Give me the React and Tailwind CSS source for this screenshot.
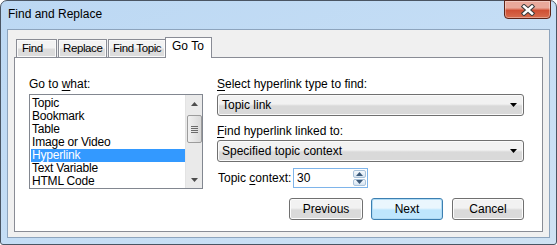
import React from 'react'

const ITEMS = ['Topic', 'Bookmark', 'Table', 'Image or Video', 'Hyperlink', 'Text Variable', 'HTML Code']
const SELECTED = 'Hyperlink'

const TABS = [
  { label: 'Find', w: 'w-[41px] pl-[5px]' },
  { label: 'Replace', w: 'w-[49px] ml-px pl-[4px]' },
  { label: 'Find Topic', w: 'w-[58px] ml-px pl-[4px]' },
]

function Key({ children }) {
  return <span className="underline underline-offset-2">{children}</span>
}

function CloseIcon() {
  return (
    <svg width="16" height="12" viewBox="0 0 16 12">
      <path d="M4 2.5L12 9.5M12 2.5L4 9.5" stroke="#3b3b3b" strokeWidth="4.5" strokeLinecap="square" />
      <path d="M4 2.5L12 9.5M12 2.5L4 9.5" stroke="#ffffff" strokeWidth="2.5" strokeLinecap="square" />
    </svg>
  )
}

function DropArrow() {
  return (
    <svg width="7" height="4" viewBox="0 0 7 4">
      <path d="M0 0H7L3.5 4Z" fill="#000" />
    </svg>
  )
}

function SmallArrow({ up, color = '#4d4d4d' }) {
  return (
    <svg width="7" height="4" viewBox="0 0 7 4">
      <path d={up ? 'M0 4H7L3.5 0Z' : 'M0 0H7L3.5 4Z'} fill={color} />
    </svg>
  )
}

function Combo({ value }) {
  return (
    <div className="h-[22px] w-full flex items-center justify-between rounded-[3px] border border-[#707070] bg-gradient-to-b from-[#f2f2f2] from-45% to-[#d9d9d9] to-55% shadow-[inset_0_0_0_1px_#fafafa] pl-[4px] pr-[6px]">
      <span>{value}</span>
      <DropArrow />
    </div>
  )
}

function Button({ children, focused, w }) {
  return (
    <div
      className={
        w + ' h-[22px] flex items-center justify-center rounded-[3px] border ' +
        (focused
          ? 'border-[#3c7fb1] bg-gradient-to-b from-[#eaf6fd] from-45% to-[#bee6fd] to-55% shadow-[inset_0_0_0_1px_#b0dbf4]'
          : 'border-[#707070] bg-gradient-to-b from-[#f2f2f2] from-45% to-[#dadada] to-55% shadow-[inset_0_0_0_1px_#fcfcfc]')
      }
    >
      {children}
    </div>
  )
}

export default function App() {
  return (
    <div className="w-[557px] h-[245px] font-['Liberation_Sans',Arial,sans-serif] text-[12px] leading-[15px] text-black">
      <div className="w-full h-full flex flex-col rounded-t-[7px] rounded-b-[3px] border border-[#4a5563] bg-gradient-to-br from-[#bcd8f3] via-[#c4ddf5] to-[#cfe2f3]">
        {/* Title bar */}
        <div className="h-[28px] flex items-start justify-between pl-[7px] pr-[5px]">
          <div className="pt-[6px]">Find and Replace</div>
          <div className="w-[47px] h-[19px] -mt-px flex items-center justify-center rounded-b-[4px] border border-[#5c2419] bg-gradient-to-b from-[#e9a99b] from-40% via-[#cf4f34] via-55% to-[#d76c4e] shadow-[inset_0_0_0_1px_rgba(255,255,255,0.35)]">
            <CloseIcon />
          </div>
        </div>

        {/* Client area */}
        <div className="flex-1 mx-[6px] mb-[6px] border border-[#8da4bd] bg-[#f0f0f0] flex flex-col pt-[7px] pl-[6px] pr-[6px] pb-[5px]">
          {/* Tabs */}
          <div className="flex items-end h-[20px] pl-[2px] relative z-10">
            {TABS.map(t => (
              <div
                key={t.label}
                className={t.w + ' h-[18px] border border-b-0 border-[#898c95] bg-gradient-to-b from-[#f3f3f3] from-45% to-[#dcdcdc] to-55% shadow-[inset_0_0_0_1px_#fafafa] pt-[1px] whitespace-nowrap text-[11.5px] tracking-[-0.4px]'}
              >
                {t.label}
              </div>
            ))}
            <div className="w-[47px] h-[21px] -mb-px -ml-px border border-b-0 border-[#898c95] bg-white pl-[6px] pt-[1px] whitespace-nowrap">
              Go To
            </div>
          </div>

          {/* Panel */}
          <div className="flex-1 border border-[#898c95] bg-white flex pl-[14px] pt-[19px]">
            {/* Left column */}
            <div className="w-[174px] flex flex-col">
              <div className="h-[15px]">Go to <Key>w</Key>hat:</div>
              <div className="mt-[2px] h-[95px] border border-[#828790] bg-white flex">
                <div className="flex-1 pt-[2px] pl-px">
                  {ITEMS.map(it => (
                    <div
                      key={it}
                      className={'h-[13px] leading-[13px] pl-[1px] tracking-[-0.2px] ' + (it === SELECTED ? 'bg-[#3399ff] text-white' : '')}
                    >
                      {it}
                    </div>
                  ))}
                </div>
                <div className="w-[17px] bg-[#eaeaea] border-l border-[#e3e3e3] flex flex-col items-center">
                  <div className="h-[17px] w-full flex items-center justify-center">
                    <SmallArrow up />
                  </div>
                  <div className="mt-[3px] w-[15px] h-[28px] rounded-[2px] border border-[#9c9c9c] bg-gradient-to-r from-[#f1f1f1] to-[#d9d9d9] flex flex-col items-center justify-center gap-[1px]">
                    <div className="w-[7px] h-px bg-[#6b6b6b]" />
                    <div className="w-[7px] h-px bg-[#6b6b6b]" />
                    <div className="w-[7px] h-px bg-[#6b6b6b]" />
                    <div className="w-[7px] h-px bg-[#6b6b6b]" />
                  </div>
                  <div className="flex-1" />
                  <div className="h-[17px] w-full flex items-center justify-center">
                    <SmallArrow />
                  </div>
                </div>
              </div>
            </div>

            {/* Right column */}
            <div className="ml-[14px] w-[307px] flex flex-col">
              <div className="h-[15px]"><Key>S</Key>elect hyperlink type to find:</div>
              <div className="mt-[2px]"><Combo value="Topic link" /></div>
              <div className="mt-[8px] h-[15px]"><Key>F</Key>ind hyperlink linked to:</div>
              <div className="mt-[1px]"><Combo value="Specified topic context" /></div>
              <div className="mt-[6px] flex items-center">
                <div className="w-[76px] pl-px">Topic <Key>c</Key>ontext:</div>
                <div className="w-[75px] h-[20px] border border-[#7eb4ea] bg-white flex">
                  <div className="flex-1 pl-[3px] flex items-center">30</div>
                  <div className="w-[15px] flex flex-col gap-px p-px">
                    <div className="flex-1 rounded-[2px] border border-[#a9c2da] bg-gradient-to-b from-[#f5f9fd] to-[#d6e3f0] flex items-center justify-center">
                      <SmallArrow up color="#3c5a7a" />
                    </div>
                    <div className="flex-1 rounded-[2px] border border-[#a9c2da] bg-gradient-to-b from-[#f5f9fd] to-[#d6e3f0] flex items-center justify-center">
                      <SmallArrow color="#3c5a7a" />
                    </div>
                  </div>
                </div>
              </div>
              <div className="mt-[10px] flex justify-end">
                <Button w="w-[74px]">Previous</Button>
                <div className="w-[8px]" />
                <Button w="w-[72px]" focused>Next</Button>
                <div className="w-[9px]" />
                <Button w="w-[72px]">Cancel</Button>
              </div>
            </div>
          </div>
        </div>
      </div>
    </div>
  )
}
